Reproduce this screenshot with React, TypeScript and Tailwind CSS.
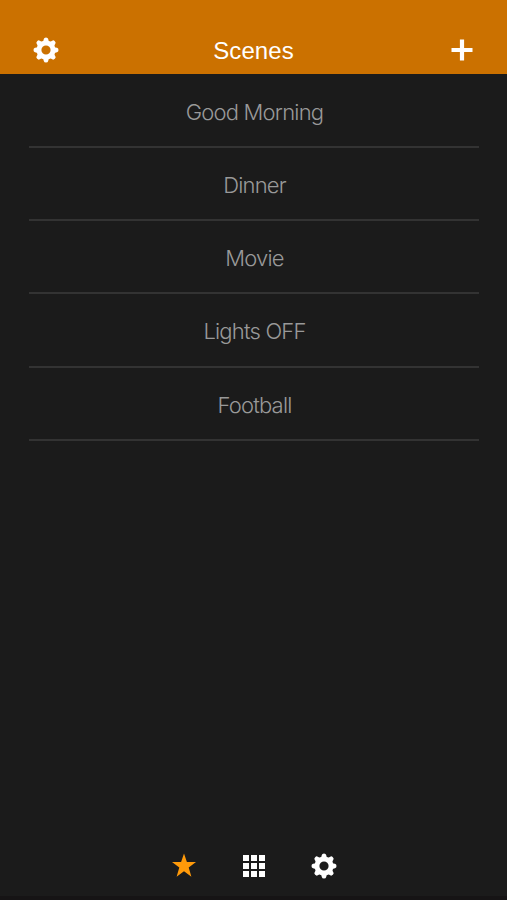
import { useState } from 'react';

const scenes = ["Good Morning", "Dinner", "Movie", "Lights OFF", "Football"];

const teeth = [0, 45, 90, 135, 180, 225, 270, 315];

const cells = [1, 2, 3, 4, 5, 6, 7, 8, 9];

function GearIcon() {
    return (
        <svg viewBox="-13 -13 26 26" className="w-[26px] h-[26px]" fill="#fff">
            {teeth.map((angle) => (
                <path key={angle} d="M-3.6 -8 Q-2.4 -9.2 -2.2 -11 Q-1.9 -12.5 0 -12.5 Q1.9 -12.5 2.2 -11 Q2.4 -9.2 3.6 -8 Z" transform={`rotate(${angle})`} />
            ))}
            <circle r="7" fill="none" stroke="#fff" strokeWidth="4.8" />
        </svg>
    );
}

function PlusIcon() {
    return (
        <svg viewBox="0 0 22 22" className="w-[22px] h-[22px]" fill="#fff">
            <path d="M8.9 0.5 H13.1 V8.9 H21.5 V13.1 H13.1 V21.5 H8.9 V13.1 H0.5 V8.9 H8.9 Z" />
        </svg>
    );
}

function StarIcon() {
    return (
        <svg viewBox="-13 -13 26 26" className="w-[26px] h-[26px]" fill="#ff9a0a">
            <path d="M0 -12.6 L2.9 -3.9 H12 L4.7 1.5 L7.4 10.8 L0 5.2 L-7.4 10.8 L-4.7 1.5 L-12 -3.9 H-2.9 Z" />
        </svg>
    );
}

function GridIcon() {
    return (
        <div className="grid grid-cols-3 gap-[2px]">
            {cells.map((cell) => (
                <span key={cell} className="w-[6px] h-[6px] bg-white" />
            ))}
        </div>
    );
}

export default function App() {
    const [active, setActive] = useState("");

    return (
        <div className="w-full h-screen flex flex-col bg-[#1b1b1b] overflow-hidden font-['Inter',sans-serif]">
            <header className="h-[74px] shrink-0 bg-[#cb7100] flex items-center justify-between pt-[26px] pl-[33px] pr-[34px]">
                <button aria-label="Settings"><GearIcon /></button>
                <h1 className="text-[24px] leading-[24px] tracking-[0.1px] pr-[3px] pt-[2px] text-white font-['Liberation_Sans',sans-serif]">Scenes</h1>
                <button aria-label="Add scene"><PlusIcon /></button>
            </header>

            <main className="flex-1 px-[28.5px] pt-[0.6px]">
                {scenes.map((scene) => (
                    <button
                        key={scene}
                        onClick={() => setActive(scene)}
                        aria-pressed={active === scene}
                        className="block w-full h-[73.25px] pt-[4px] pl-[2px] border-b-2 border-[#333333] text-[22px] font-light tracking-[-0.8px] text-[#999999] text-center"
                    >
                        {scene}
                    </button>
                ))}
            </main>

            <nav className="h-[68px] shrink-0 flex items-center justify-center gap-[46px] pt-[4px] border-b-4 border-[#161415]">
                <button aria-label="Scenes"><StarIcon /></button>
                <button aria-label="Rooms"><GridIcon /></button>
                <button aria-label="Settings"><GearIcon /></button>
            </nav>
        </div>
    );
}
